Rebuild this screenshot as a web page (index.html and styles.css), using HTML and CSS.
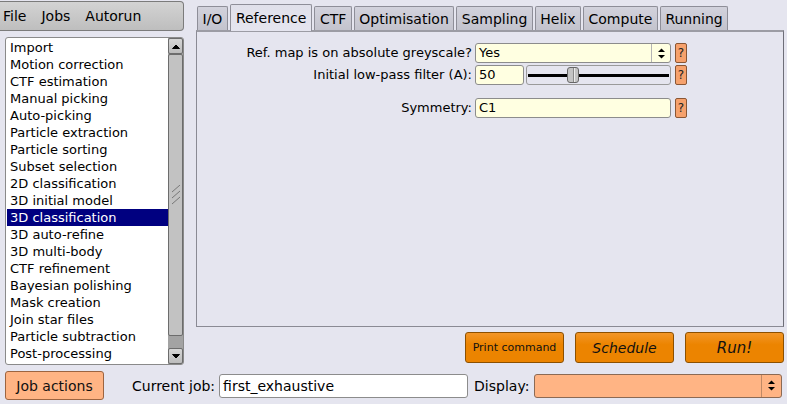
FILE: index.html
```html
<!DOCTYPE html>
<html lang="en">
<head>
  <meta charset="UTF-8">
  <title>RELION</title>
  <link rel="stylesheet" href="styles.css">
</head>
<body>

<div class="app">
  <div class="top">
    <aside class="side">
      <div class="menubar">
        <span>File</span>
        <span>Jobs</span>
        <span>Autorun</span>
      </div>

      <div class="joblist">
        <ul class="items">
          <li>Import</li>
          <li>Motion correction</li>
          <li>CTF estimation</li>
          <li>Manual picking</li>
          <li>Auto-picking</li>
          <li>Particle extraction</li>
          <li>Particle sorting</li>
          <li>Subset selection</li>
          <li>2D classification</li>
          <li>3D initial model</li>
          <li class="sel">3D classification</li>
          <li>3D auto-refine</li>
          <li>3D multi-body</li>
          <li>CTF refinement</li>
          <li>Bayesian polishing</li>
          <li>Mask creation</li>
          <li>Join star files</li>
          <li>Particle subtraction</li>
          <li>Post-processing</li>
        </ul>
        <div class="scrollbar">
          <div class="sb-btn">
            <svg width="8" height="5" viewBox="0 0 8 5"><polygon points="0.5,4.5 4,1 7.5,4.5" fill="#000" stroke="#000" stroke-width="1"/></svg>
          </div>
          <div class="sb-thumb">
            <svg width="10" height="20" viewBox="0 0 10 20">
              <g stroke="#777" stroke-width="1">
                <line x1="1" y1="7" x2="9" y2="0"/>
                <line x1="1" y1="13" x2="9" y2="6"/>
                <line x1="1" y1="19" x2="9" y2="12"/>
              </g>
            </svg>
          </div>
          <div class="sb-trough"></div>
          <div class="sb-btn">
            <svg width="8" height="5" viewBox="0 0 8 5"><polygon points="0.5,0.5 4,4 7.5,0.5" fill="#000" stroke="#000" stroke-width="1"/></svg>
          </div>
        </div>
      </div>
    </aside>

    <main class="work">
      <nav class="tabs">
        <div class="tab">I/O</div>
        <div class="tab active">Reference</div>
        <div class="tab">CTF</div>
        <div class="tab">Optimisation</div>
        <div class="tab">Sampling</div>
        <div class="tab">Helix</div>
        <div class="tab">Compute</div>
        <div class="tab">Running</div>
      </nav>

      <section class="panel">
        <div class="row">
          <label class="lbl">Ref. map is on absolute greyscale?</label>
          <div class="ctrl choice">
            <span class="choice-text">Yes</span>
            <span class="choice-arrow">
              <svg width="9" height="13" viewBox="0 0 9 13"><polygon points="1,5 4.5,1.5 8,5" fill="#000"/><polygon points="1,8 4.5,11.5 8,8" fill="#000"/></svg>
            </span>
          </div>
          <div class="help">?</div>
        </div>

        <div class="row tight">
          <label class="lbl">Initial low-pass filter (A):</label>
          <div class="ctrl split">
            <div class="field small">50</div>
            <div class="slider">
              <div class="track left"></div>
              <div class="thumb"></div>
              <div class="track right"></div>
            </div>
          </div>
          <div class="help">?</div>
        </div>

        <div class="row spaced">
          <label class="lbl">Symmetry:</label>
          <div class="ctrl field">C1</div>
          <div class="help">?</div>
        </div>
      </section>

      <div class="actions">
        <button class="run-btn small-text">Print command</button>
        <button class="run-btn italic">Schedule</button>
        <button class="run-btn italic big">Run!</button>
      </div>
    </main>
  </div>

  <footer class="bottom">
    <button class="job-actions">Job actions</button>
    <span class="foot-lbl first">Current job:</span>
    <div class="job-name">first_exhaustive</div>
    <span class="foot-lbl">Display:</span>
    <div class="display-choice">
      <span class="choice-arrow">
        <svg width="9" height="13" viewBox="0 0 9 13"><polygon points="1,5 4.5,1.5 8,5" fill="#000"/><polygon points="1,8 4.5,11.5 8,8" fill="#000"/></svg>
      </span>
    </div>
  </footer>
</div>

</body>
</html>
```

FILE: styles.css
```css
* {
  box-sizing: border-box;
}

body {
  margin: 0;
  background: #e5e5ef;
  font-family: "DejaVu Sans", sans-serif;
  font-size: 13px;
  color: #000;
}

.app {
  width: 787px;
  height: 404px;
  display: flex;
  flex-direction: column;
  overflow: hidden;
}

.top {
  display: flex;
  height: 366px;
}

/* left column: menu + job type list */

.side {
  width: 184px;
  flex: none;
  padding-top: 1px;
}

.menubar {
  height: 30px;
  display: flex;
  align-items: center;
  padding-left: 3px;
  font-size: 14px;
  background: linear-gradient(#d3d3d3, #bebebe);
  border: 1px solid #7b7b7b;
  border-left: none;
  border-radius: 0 4px 4px 0;
}

.menubar span + span {
  margin-left: 15px;
}

.joblist {
  margin: 6px 0 0 5px;
  height: 328px;
  background: #fff;
  border: 1px solid #8a8a8a;
  border-radius: 3px;
  display: flex;
}

.items {
  list-style: none;
  margin: 0;
  padding: 1px 0 0 1px;
  flex: 1;
}

.items li {
  height: 17px;
  line-height: 17px;
  padding-left: 3px;
  white-space: nowrap;
}

.items li.sel {
  background: #000080;
  color: #fff;
}

.scrollbar {
  width: 15px;
  flex: none;
  display: flex;
  flex-direction: column;
  background: #a3a3a3;
}

.sb-btn {
  height: 16px;
  display: flex;
  align-items: center;
  justify-content: center;
  background: linear-gradient(#d6d6d6, #bcbcbc);
  border: 1px solid #6c6c6c;
  border-radius: 2px;
}

.sb-thumb {
  height: 282px;
  display: flex;
  align-items: center;
  justify-content: center;
  background: #c2c2c2;
  border: 1px solid #6c6c6c;
  border-radius: 2px;
}

.sb-trough {
  flex: 1;
}

/* right column: tabs + parameters */

.work {
  margin-left: 12px;
  width: 588px;
  display: flex;
  flex-direction: column;
}

.tabs {
  height: 30px;
  display: flex;
  align-items: flex-end;
  gap: 2px;
  padding-left: 1px;
}

.tab {
  height: 24px;
  padding: 0 4.5px;
  display: flex;
  align-items: center;
  font-size: 14px;
  background: linear-gradient(#d2d2dc, #c3c3cd);
  border: 1px solid #8e8e98;
  border-bottom: none;
  border-radius: 2px 2px 0 0;
}

.tab.active {
  height: 27px;
  padding: 0 5px;
  position: relative;
  top: 1px;
  z-index: 1;
  background: linear-gradient(#e0e0ea, #e5e5ef);
}

.panel {
  height: 297px;
  border: 1px solid #8a8a94;
  border-top: 2px solid #9c9ca4;
  border-right-color: #6e6e78;
  padding-top: 11px;
}

.row {
  display: flex;
  height: 20px;
  align-items: stretch;
}

.row.tight {
  margin-top: 2px;
}

.row.spaced {
  margin-top: 13px;
}

.lbl {
  width: 275px;
  text-align: right;
  line-height: 20px;
  white-space: nowrap;
}

.ctrl {
  width: 196px;
  margin-left: 3px;
}

.field {
  background: #ffffe1;
  border: 1px solid #8c8c8c;
  border-radius: 3px;
  padding-left: 3px;
  line-height: 18px;
}

.choice {
  display: flex;
  background: #ffffe1;
  border: 1px solid #8c8c8c;
  border-radius: 3px;
}

.choice-text {
  flex: 1;
  padding-left: 3px;
  line-height: 18px;
}

.choice-arrow {
  width: 19px;
  display: flex;
  align-items: center;
  justify-content: center;
  border-left: 1px solid #b4b4b4;
}

.split {
  display: flex;
  gap: 2px;
}

.field.small {
  width: 49px;
  flex: none;
}

.slider {
  flex: 1;
  display: flex;
  align-items: center;
  padding: 0 1px;
  border: 1px solid #9a9a9a;
  border-radius: 3px;
}

.track {
  height: 3px;
  background: #000;
}

.track.left {
  width: 39px;
}

.track.right {
  flex: 1;
}

.thumb {
  width: 12px;
  height: 16px;
  flex: none;
  background: linear-gradient(90deg, #c4c4c4 0 5px, #8a8a8a 5px 6px, #ececec 6px 7px, #c4c4c4 7px);
  border: 1px solid #666;
  border-radius: 3px;
}

.help {
  width: 12px;
  margin-left: 4px;
  background: #f6a16c;
  border: 1px solid #8a5634;
  border-radius: 2px;
  font-size: 12px;
  line-height: 18px;
  text-align: center;
  color: #222;
}

.actions {
  display: flex;
  justify-content: flex-end;
  gap: 11px;
  margin-top: 5px;
}

.run-btn {
  width: 99px;
  height: 31px;
  padding: 0;
  font-family: "DejaVu Sans", sans-serif;
  font-size: 14px;
  color: #111;
  background: linear-gradient(#f29628, #ec8400 40%);
  border: 1px solid #8c5000;
  border-radius: 3px;
}

.run-btn.small-text {
  font-size: 11px;
}

.run-btn.italic {
  font-style: italic;
}

.run-btn.big {
  font-size: 15px;
}

/* bottom strip */

.bottom {
  flex: 1;
  display: flex;
  align-items: center;
  padding: 1px 0 0 5px;
  font-size: 14px;
}

.job-actions {
  width: 99px;
  height: 29px;
  padding: 0;
  font-family: "DejaVu Sans", sans-serif;
  font-size: 14px;
  color: #111;
  background: #ffb484;
  border: 1px solid #9c6440;
  border-radius: 3px;
}

.foot-lbl {
  margin-left: 6px;
}

.foot-lbl.first {
  margin-left: 28px;
}

.job-name {
  width: 249px;
  height: 24px;
  margin-left: 4px;
  padding-left: 3px;
  line-height: 22px;
  background: #fff;
  border: 1px solid #8c8c8c;
  border-radius: 3px;
}

.display-choice {
  width: 248px;
  height: 24px;
  margin-left: 5px;
  display: flex;
  justify-content: flex-end;
  background: #ffb484;
  border: 1px solid #8c6a54;
  border-radius: 3px;
}

.display-choice .choice-arrow {
  width: 20px;
  border-left-color: #c08a66;
}
```
